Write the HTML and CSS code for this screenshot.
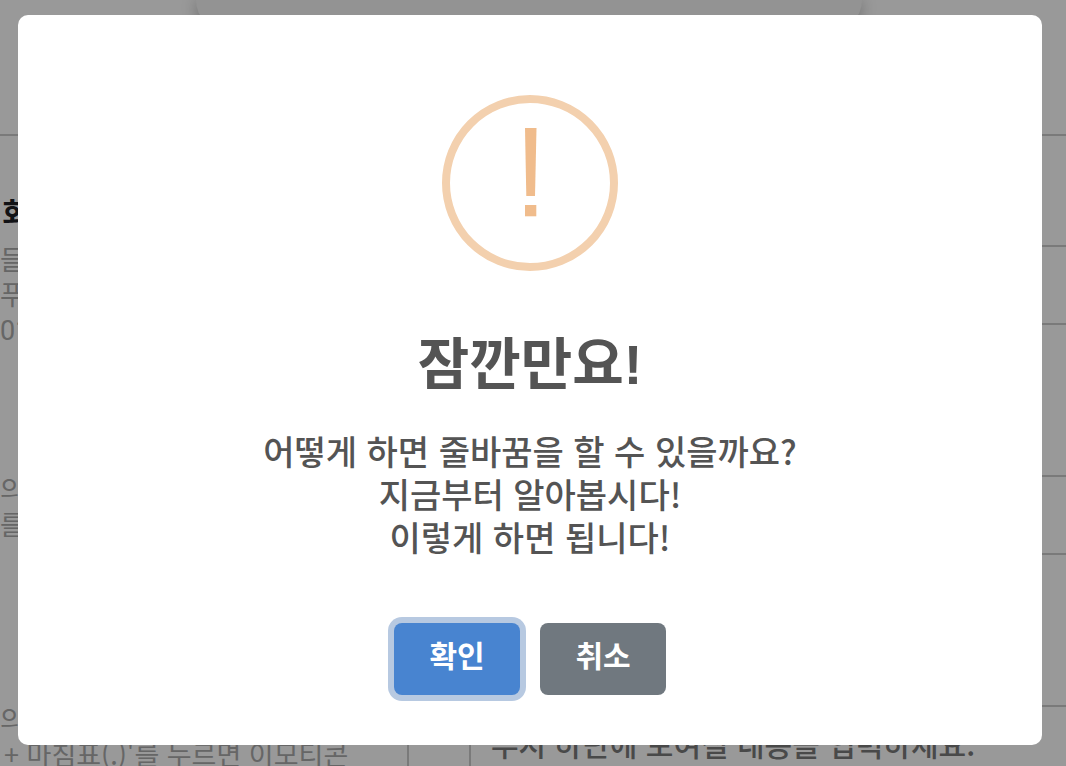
FILE: index.html
```html
<!DOCTYPE html>
<html lang="ko">
<head>
  <meta charset="UTF-8">
  <meta name="viewport" content="width=device-width, initial-scale=1.0">
  <title>잠깐만요!</title>
  <link rel="stylesheet" href="styles.css">
</head>
<body>
  <!-- 뒤쪽 페이지 -->
  <div class="page">
    <header class="page-header">
      <div class="preview"></div>
    </header>
    <main class="form">
      <div class="guide">
        <section class="guide-row">
          <h3>회</h3>
          <p>들<br>푸<br><span class="num">01</span></p>
        </section>
        <section class="guide-row">
          <p>의<br>를</p>
        </section>
        <section class="guide-row">
          <p>의<br><span class="keys">+ 마침표(.)'를 누르면 이모티콘</span></p>
        </section>
      </div>
      <div class="fields">
        <div class="field"><input type="text" aria-label="제목"></div>
        <div class="field"><input type="text" aria-label="내용"></div>
        <div class="field"><textarea aria-label="푸시 하단 내용" placeholder="푸시 하단에 보여질 내용을 입력하세요."></textarea></div>
      </div>
    </main>
  </div>

  <!-- 알림창 -->
  <div class="overlay">
    <div class="modal" role="dialog" aria-modal="true" aria-labelledby="modal-title">
      <svg class="modal-icon" viewBox="0 0 176 176" aria-hidden="true">
        <circle cx="88" cy="88" r="84" fill="none" stroke="#f3d0ae" stroke-width="8"/>
        <polygon points="83,33 94.5,33 93,101 84.3,101" fill="#f0bc8c"/>
        <rect x="83" y="110" width="11.3" height="11.3" fill="#f0bc8c"/>
      </svg>
      <h2 class="modal-title" id="modal-title">잠깐만요!</h2>
      <p class="modal-text">어떻게 하면 줄바꿈을 할 수 있을까요?<br>지금부터 알아봅시다!<br>이렇게 하면 됩니다!</p>
      <div class="modal-actions">
        <button type="button" class="btn btn-confirm">확인</button>
        <button type="button" class="btn btn-cancel">취소</button>
      </div>
    </div>
  </div>
</body>
</html>
```
FILE: styles.css
```css
* {
  box-sizing: border-box;
}
body {
  margin: 0;
  background: #fff;
  font-family: 'Noto Sans CJK KR', 'Noto Sans', sans-serif;
}
h2, h3, p {
  margin: 0;
}
.page {
  height: 100vh;
  overflow: hidden;
}
.page-header {
  height: 136px;
  padding-right: 8px;
  border-bottom: 2px solid #ccc;
}
.preview {
  width: 63%;
  height: 32px;
  margin: 0 auto;
  background: #f5f5f5;
  border-radius: 0 0 40px 40px;
  box-shadow: 0 2px 16px rgba(0,0,0,0.3);
}
.form {
  display: grid;
  grid-template-columns: 409px 1fr;
  gap: 60px;
}
.guide {
  padding-top: 51px;
  border-right: 2px solid #ccc;
}
.guide-row {
  height: 230px;
  padding-top: 54px;
}
.guide-row:first-child {
  padding-top: 6px;
}
.guide h3 {
  margin-bottom: 12px;
  padding-left: 2px;
  font-size: 30px;
  line-height: 36px;
  color: #1e2025;
}
.guide p {
  font-size: 27px;
  line-height: 35px;
  color: #aaa;
}
.num {
  font-family: Roboto, sans-serif;
}
.keys {
  padding-left: 4px;
}
.fields {
  padding-top: 109px;
}
.field {
  height: 230px;
}
.field input,
.field textarea {
  display: block;
  width: 100%;
  height: 80px;
  padding: 16px 20px;
  border: 2px solid #ccc;
  border-right: 0;
  background: #fff;
  font-family: inherit;
  font-size: 30px;
  line-height: 40px;
}
.field textarea {
  height: 160px;
  resize: none;
}
.field textarea::placeholder {
  color: #7a7a7a;
  font-weight: 500;
}
.overlay {
  position: fixed;
  inset: 0;
  display: flex;
  justify-content: center;
  align-items: center;
  padding: 15px 24px 21px 18px;
  background: rgba(0,0,0,0.4);
}
.modal {
  display: flex;
  flex-direction: column;
  align-items: center;
  width: 100%;
  max-width: 1024px;
  padding: 80px 32px 50px;
  background: #fff;
  border-radius: 10px;
  text-align: center;
  color: #545454;
}
.modal-icon {
  width: 176px;
  height: 176px;
}
.modal-title {
  margin-top: 54px;
  font-family: 'Liberation Sans', 'Noto Sans CJK KR', sans-serif;
  font-size: 56px;
  line-height: 80px;
}
.modal-text {
  margin-top: 24px;
  font-size: 34px;
  font-weight: 500;
  line-height: 43px;
}
.modal-actions {
  display: flex;
  gap: 20px;
  margin-top: 65px;
}
.btn {
  width: 126px;
  height: 72px;
  padding: 0 0 10px;
  border: 0;
  border-radius: 8px;
  font-family: inherit;
  font-size: 30px;
  font-weight: 700;
  color: #fff;
  cursor: pointer;
}
.btn-confirm {
  background: #4884d0;
  box-shadow: 0 0 0 6px #b7c9e1;
}
.btn-cancel {
  background: #70787f;
}
```
